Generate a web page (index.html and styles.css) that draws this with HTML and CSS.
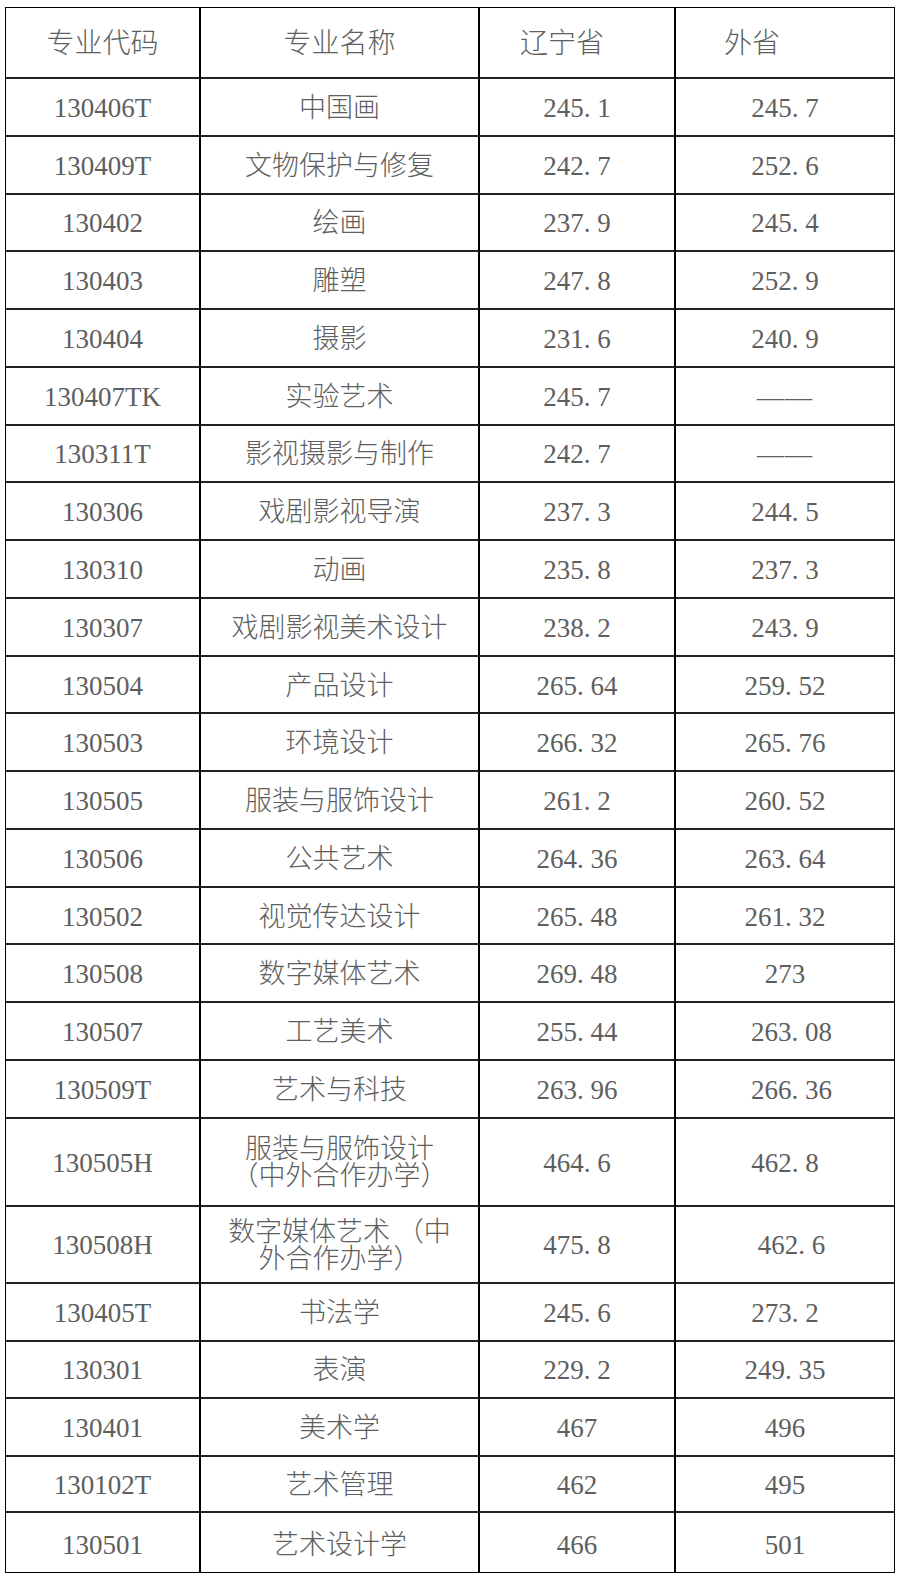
FILE: index.html
```html
<!DOCTYPE html>
<html lang="zh-CN">
<head>
<meta charset="utf-8">
<title>专业分数线</title>
<link rel="stylesheet" href="styles.css">
</head>
<body>
<table class="scores">
  <colgroup>
    <col class="c-code"><col class="c-name"><col class="c-ln"><col class="c-out">
  </colgroup>
  <thead>
    <tr class="head">
      <th>专业代码</th><th>专业名称</th><th class="h-ln">辽宁省</th><th class="h-out">外省</th>
    </tr>
  </thead>
  <tbody>
    <tr><td>130406T</td><td>中国画</td><td>245<i class="pt">.</i>1</td><td>245<i class="pt">.</i>7</td></tr>
    <tr><td>130409T</td><td>文物保护与修复</td><td>242<i class="pt">.</i>7</td><td>252<i class="pt">.</i>6</td></tr>
    <tr><td>130402</td><td>绘画</td><td>237<i class="pt">.</i>9</td><td>245<i class="pt">.</i>4</td></tr>
    <tr><td>130403</td><td>雕塑</td><td>247<i class="pt">.</i>8</td><td>252<i class="pt">.</i>9</td></tr>
    <tr><td>130404</td><td>摄影</td><td>231<i class="pt">.</i>6</td><td>240<i class="pt">.</i>9</td></tr>
    <tr><td>130407TK</td><td>实验艺术</td><td>245<i class="pt">.</i>7</td><td class="dash">——</td></tr>
    <tr><td>130311T</td><td>影视摄影与制作</td><td>242<i class="pt">.</i>7</td><td class="dash">——</td></tr>
    <tr><td>130306</td><td>戏剧影视导演</td><td>237<i class="pt">.</i>3</td><td>244<i class="pt">.</i>5</td></tr>
    <tr><td>130310</td><td>动画</td><td>235<i class="pt">.</i>8</td><td>237<i class="pt">.</i>3</td></tr>
    <tr><td>130307</td><td>戏剧影视美术设计</td><td>238<i class="pt">.</i>2</td><td>243<i class="pt">.</i>9</td></tr>
    <tr><td>130504</td><td>产品设计</td><td>265<i class="pt">.</i>64</td><td>259<i class="pt">.</i>52</td></tr>
    <tr><td>130503</td><td>环境设计</td><td>266<i class="pt">.</i>32</td><td>265<i class="pt">.</i>76</td></tr>
    <tr><td>130505</td><td>服装与服饰设计</td><td>261<i class="pt">.</i>2</td><td>260<i class="pt">.</i>52</td></tr>
    <tr><td>130506</td><td>公共艺术</td><td>264<i class="pt">.</i>36</td><td>263<i class="pt">.</i>64</td></tr>
    <tr><td>130502</td><td>视觉传达设计</td><td>265<i class="pt">.</i>48</td><td>261<i class="pt">.</i>32</td></tr>
    <tr><td>130508</td><td>数字媒体艺术</td><td>269<i class="pt">.</i>48</td><td>273</td></tr>
    <tr><td>130507</td><td>工艺美术</td><td>255<i class="pt">.</i>44</td><td class="lead">263<i class="pt">.</i>08</td></tr>
    <tr><td>130509T</td><td>艺术与科技</td><td>263<i class="pt">.</i>96</td><td class="lead">266<i class="pt">.</i>36</td></tr>
    <tr class="tall-a"><td>130505H</td><td class="two">服装与服饰设计<br>（中外合作办学）</td><td>464<i class="pt">.</i>6</td><td>462<i class="pt">.</i>8</td></tr>
    <tr class="tall-b"><td>130508H</td><td class="two">数字媒体艺术 （中<br>外合作办学）</td><td>475<i class="pt">.</i>8</td><td class="lead">462<i class="pt">.</i>6</td></tr>
    <tr><td>130405T</td><td>书法学</td><td>245<i class="pt">.</i>6</td><td>273<i class="pt">.</i>2</td></tr>
    <tr><td>130301</td><td>表演</td><td>229<i class="pt">.</i>2</td><td>249<i class="pt">.</i>35</td></tr>
    <tr class="r58"><td>130401</td><td>美术学</td><td>467</td><td>496</td></tr>
    <tr class="r56"><td>130102T</td><td>艺术管理</td><td>462</td><td>495</td></tr>
    <tr class="last"><td>130501</td><td>艺术设计学</td><td>466</td><td>501</td></tr>
  </tbody>
</table>
</body>
</html>
```
FILE: styles.css
```css
html, body {
  margin: 0;
  padding: 0;
  background: #ffffff;
}

body {
  padding: 7px 0 0 5px;
}

.scores {
  box-sizing: border-box;
  width: 890px;
  table-layout: fixed;
  border-collapse: separate;
  border-spacing: 0;
  border: 1px solid #000;
  font-family: "Liberation Serif", "Noto Sans CJK SC", serif;
  font-size: 27px;
  font-weight: 300;
  color: #5e5e5e;
}

.c-code { width: 195px; }
.c-name { width: 279px; }
.c-ln { width: 196px; }
.c-out { width: 218px; }

.scores th,
.scores td {
  padding: 0;
  text-align: center;
  vertical-align: middle;
  font-weight: 300;
  line-height: 1;
  border-right: 2px solid #000;
  border-bottom: 2px solid #222;
  white-space: nowrap;
}

.scores td {
  padding-top: 3px;
}

.scores th:last-child,
.scores td:last-child {
  border-right: none;
}

.scores tr.last td {
  border-bottom: none;
}

.head {
  height: 71px;
}

.head th {
  font-size: 28px;
  padding-top: 2px;
}

.scores th.h-ln {
  text-align: left;
  padding-left: 40px;
}

.scores th.h-out {
  text-align: left;
  padding-left: 48px;
}

.scores tbody tr {
  height: 57.78px;
}

.scores tbody tr.tall-a { height: 88px; }
.scores tbody tr.tall-b { height: 77px; }
.scores tbody tr.r58 { height: 58px; }
.scores tbody tr.r56 { height: 56px; }
.scores tbody tr.last { height: 59px; }

.scores td.two {
  line-height: 27px;
}

.scores tr.last td {
  padding-top: 5px;
}

.pt {
  font-style: normal;
  margin-right: 0.25em;
}

.scores td.lead {
  padding-left: 13px;
}

.scores td.dash {
  letter-spacing: 1px;
}
```
